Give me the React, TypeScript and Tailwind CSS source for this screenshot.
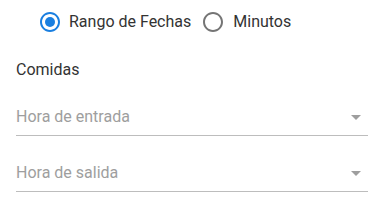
import React from 'react';

function RadioIcon({ checked }: { checked: boolean }) {
  return (
    <svg viewBox="0 0 24 24" className="h-6 w-6" fill={checked ? '#1a7fe0' : '#757575'}>
      <path d="M12 2C6.48 2 2 6.48 2 12s4.48 10 10 10 10-4.48 10-10S17.52 2 12 2zm0 18c-4.42 0-8-3.58-8-8s3.58-8 8-8 8 3.58 8 8-3.58 8-8 8z" />
      {checked && <circle cx="12" cy="12" r="5" />}
    </svg>
  );
}

function SelectField({ label }: { label: string }) {
  return (
    <div className="flex h-[38px] items-center justify-between border-b border-[#bdbdbd]">
      <span className="text-[16px] text-[#9e9e9e]">{label}</span>
      <svg viewBox="0 0 24 24" className="h-6 w-6" fill="#9e9e9e">
        <path d="M7 10l5 5 5-5z" />
      </svg>
    </div>
  );
}

export default function App() {
  return (
    <div className="h-[202px] w-[386px] bg-white font-['Roboto',sans-serif] text-[#212121]">
      <div className="flex items-center pl-[38px] pt-[10px]">
        <label className="flex items-center">
          <RadioIcon checked />
          <span className="ml-[7px] text-[16px] text-[#333]">Rango de Fechas</span>
        </label>
        <label className="ml-[10px] flex items-center">
          <RadioIcon checked={false} />
          <span className="ml-[8px] text-[16px] text-[#333]">Minutos</span>
        </label>
      </div>
      <div className="pl-4 pr-[18px]">
        <p className="mt-[24px] text-[16px] text-[#333]">Comidas</p>
        <div className="mt-[16px]">
          <SelectField label="Hora de entrada" />
        </div>
        <div className="mt-[18px]">
          <SelectField label="Hora de salida" />
        </div>
      </div>
    </div>
  );
}
